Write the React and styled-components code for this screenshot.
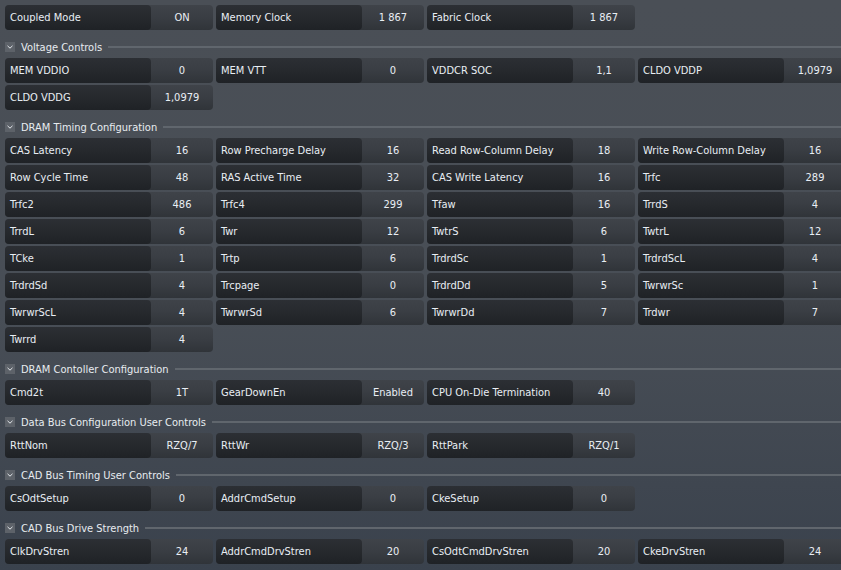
import React from 'react';
import styled, { createGlobalStyle } from 'styled-components';

const sections = [
    {
        title: null,
        items: [
            ['Coupled Mode', 'ON'],
            ['Memory Clock', '1 867'],
            ['Fabric Clock', '1 867'],
        ],
    },
    {
        title: 'Voltage Controls',
        items: [
            ['MEM VDDIO', '0'],
            ['MEM VTT', '0'],
            ['VDDCR SOC', '1,1'],
            ['CLDO VDDP', '1,0979'],
            ['CLDO VDDG', '1,0979'],
        ],
    },
    {
        title: 'DRAM Timing Configuration',
        items: [
            ['CAS Latency', '16'],
            ['Row Precharge Delay', '16'],
            ['Read Row-Column Delay', '18'],
            ['Write Row-Column Delay', '16'],
            ['Row Cycle Time', '48'],
            ['RAS Active Time', '32'],
            ['CAS Write Latency', '16'],
            ['Trfc', '289'],
            ['Trfc2', '486'],
            ['Trfc4', '299'],
            ['Tfaw', '16'],
            ['TrrdS', '4'],
            ['TrrdL', '6'],
            ['Twr', '12'],
            ['TwtrS', '6'],
            ['TwtrL', '12'],
            ['TCke', '1'],
            ['Trtp', '6'],
            ['TrdrdSc', '1'],
            ['TrdrdScL', '4'],
            ['TrdrdSd', '4'],
            ['Trcpage', '0'],
            ['TrdrdDd', '5'],
            ['TwrwrSc', '1'],
            ['TwrwrScL', '4'],
            ['TwrwrSd', '6'],
            ['TwrwrDd', '7'],
            ['Trdwr', '7'],
            ['Twrrd', '4'],
        ],
    },
    {
        title: 'DRAM Contoller Configuration',
        items: [
            ['Cmd2t', '1T'],
            ['GearDownEn', 'Enabled'],
            ['CPU On-Die Termination', '40'],
        ],
    },
    {
        title: 'Data Bus Configuration User Controls',
        items: [
            ['RttNom', 'RZQ/7'],
            ['RttWr', 'RZQ/3'],
            ['RttPark', 'RZQ/1'],
        ],
    },
    {
        title: 'CAD Bus Timing User Controls',
        items: [
            ['CsOdtSetup', '0'],
            ['AddrCmdSetup', '0'],
            ['CkeSetup', '0'],
        ],
    },
    {
        title: 'CAD Bus Drive Strength',
        items: [
            ['ClkDrvStren', '24'],
            ['AddrCmdDrvStren', '20'],
            ['CsOdtCmdDrvStren', '20'],
            ['CkeDrvStren', '24'],
        ],
    },
];

export default function App() {
    return (
        <Page>
            <GlobalStyle />
            {sections.map((sec, i) => (
                <Section key={i}>
                    {sec.title && (
                        <Header>
                            <Chevron>
                                <svg width="8" height="8" viewBox="0 0 8 8">
                                    <path d="M1.5 2.8 L4 5.2 L6.5 2.8" fill="none" stroke="#e4e8ec" strokeWidth="1" />
                                </svg>
                            </Chevron>
                            <HeaderTitle>{sec.title}</HeaderTitle>
                            <HeaderLine />
                        </Header>
                    )}
                    <Grid>
                        {sec.items.map(([label, value]) => (
                            <Cell key={label}>
                                <Label>{label}</Label>
                                <Value>{value}</Value>
                            </Cell>
                        ))}
                    </Grid>
                </Section>
            ))}
        </Page>
    );
}

const GlobalStyle = createGlobalStyle`
    html, body {
        margin: 0;
        padding: 0;
        width: 841px;
        height: 570px;
        overflow: hidden;
    }
    body {
        background: linear-gradient(180deg, #4a4f56 0%, #484e56 55%, #3f4650 85%, #3a424d 100%);
        font-family: 'DejaVu Sans Condensed', 'DejaVu Sans', sans-serif;
    }
`;

const Page = styled.div`
    padding: 5px 0 0 5px;
    width: 841px;
    height: 570px;
    box-sizing: border-box;
    overflow: hidden;
`;

const Section = styled.div`
    display: flex;
    flex-direction: column;
`;

const Header = styled.div`
    display: flex;
    align-items: center;
    height: 22px;
    margin-top: 6px;
`;

const Chevron = styled.div`
    width: 10px;
    height: 10px;
    background: #5d6269;
    display: flex;
    align-items: center;
    justify-content: center;
`;

const HeaderTitle = styled.span`
    margin-left: 6px;
    font-size: 11px;
    color: #e8ecf0;
    white-space: nowrap;
`;

const HeaderLine = styled.div`
    flex: 1;
    height: 2px;
    margin-left: 6px;
    background: #60666d;
`;

const Grid = styled.div`
    display: grid;
    grid-template-columns: repeat(4, 208px);
    column-gap: 3px;
    row-gap: 2px;
`;

const Cell = styled.div`
    display: flex;
    height: 25px;
    border-radius: 4px;
    background: linear-gradient(180deg, #3f4349 0%, #3a3e44 45%, #303439 100%);
    color: #e9eef4;
    font-size: 11px;
`;

const Label = styled.div`
    width: 146px;
    flex: none;
    display: flex;
    align-items: center;
    padding-left: 5px;
    box-sizing: border-box;
    border-radius: 4px;
    background: linear-gradient(180deg, #2c2f34 0%, #26292d 50%, #1f2226 100%);
    white-space: nowrap;
`;

const Value = styled.div`
    flex: 1;
    display: flex;
    align-items: center;
    justify-content: center;
`;
